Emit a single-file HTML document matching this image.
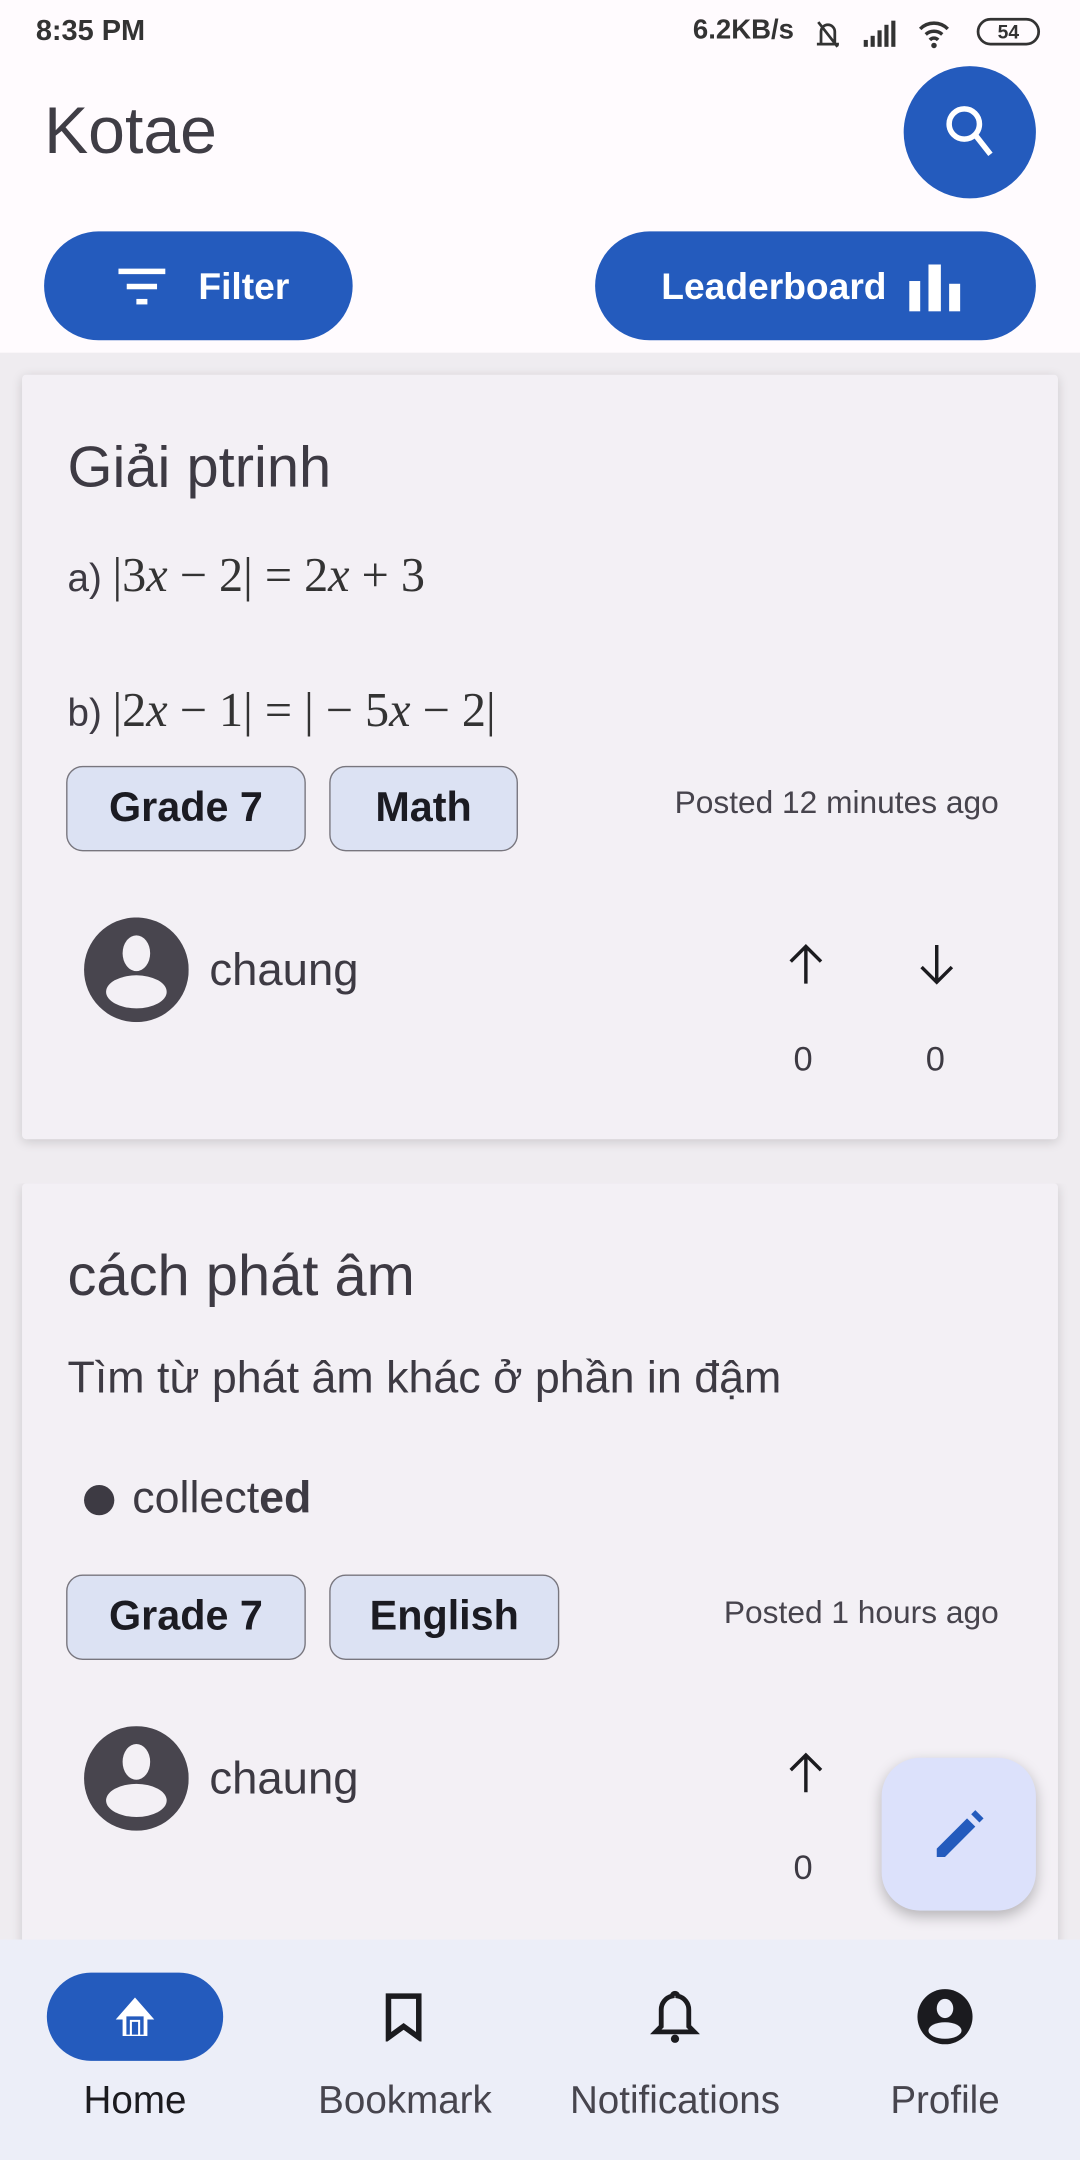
<!DOCTYPE html>
<html><head><meta charset="utf-8"><style>
html,body{margin:0;padding:0;width:1080px;height:2160px;overflow:hidden;background:#f1eef2;}
#w{position:absolute;left:0;top:0;width:784px;height:1568px;transform:scale(1.377551);transform-origin:0 0;font-family:"Liberation Sans","Noto Sans CJK SC",sans-serif;background:#efecf0;}
.a{position:absolute;}
.hdr{left:0;top:0;width:784px;height:256px;background:#fffbfe;}
.btn{background:#245bbd;border-radius:40px;color:#fff;font-weight:bold;font-size:26px;}
.card{left:16px;width:752px;background:#f3f0f5;box-shadow:0 2px 8px rgba(0,0,0,.15);border-radius:3px;}
.t{color:#3d3a43;}
.chip{background:#dce2f3;border:1.5px solid #78767e;border-radius:12px;height:62px;box-sizing:border-box;font-size:30px;font-weight:bold;color:#1b1b22;display:flex;align-items:center;justify-content:center;}
.math{font-family:"Liberation Serif",serif;font-size:35px;color:#333;}
.nav{font-size:28px;color:#47454e;text-align:center;width:196px;}
</style></head><body><div id="w">
<div class="a hdr"></div>
<div class="a" style="left:26px;top:11px;font-size:21px;font-weight:bold;color:#333">8:35 PM</div>
<div class="a" style="left:503px;top:11px;font-size:20px;font-weight:bold;color:#333">6.2KB/s</div>
<svg class="a" style="left:588px;top:12px" width="130" height="26" viewBox="0 0 130 26">
<path d="M5 20h16M8 20V11a5 5 0 0 1 10 0v9M6 4l14 18" stroke="#333" stroke-width="2" fill="none"/>
<rect x="39" y="17" width="3" height="5" fill="#333"/><rect x="44" y="14" width="3" height="8" fill="#333"/><rect x="49" y="10" width="3" height="12" fill="#333"/><rect x="54" y="6" width="3" height="16" fill="#333"/><rect x="59" y="3" width="3" height="19" fill="#333"/>
<path d="M80 9a14 14 0 0 1 20 0M84 13a9 9 0 0 1 12 0M87 17a4 4 0 0 1 6 0" stroke="#333" stroke-width="2.5" fill="none"/><circle cx="90" cy="21" r="2" fill="#333"/>
</svg>
<div class="a" style="left:709px;top:13px;width:46px;height:20px;border:2px solid #333;border-radius:10px;box-sizing:border-box;font-size:14px;font-weight:bold;text-align:center;line-height:16px;color:#333">54</div>
<div class="a" style="left:32px;top:68px;font-size:48px;color:#3f3d45">Kotae</div>
<div class="a" style="left:656px;top:48px;width:96px;height:96px;border-radius:50%;background:#245bbd"></div>
<svg class="a" style="left:678px;top:70px" width="52" height="52" viewBox="0 0 52 52"><circle cx="22" cy="20" r="11" stroke="#fff" stroke-width="4" fill="none"/><path d="M30 28l11 14" stroke="#fff" stroke-width="4"/></svg>
<div class="a btn" style="left:32px;top:168px;width:224px;height:79px"></div>
<svg class="a" style="left:84px;top:193px" width="40" height="30"><rect x="2" y="2" width="34" height="4" fill="#fff"/><rect x="8" y="13" width="22" height="4" fill="#fff"/><rect x="15" y="24" width="8" height="4" fill="#fff"/></svg>
<div class="a" style="left:144px;top:193px;font-size:27px;font-weight:bold;color:#fff">Filter</div>
<div class="a btn" style="left:432px;top:168px;width:320px;height:79px"></div>
<div class="a" style="left:480px;top:193px;font-size:27px;font-weight:bold;color:#fff">Leaderboard</div>
<svg class="a" style="left:660px;top:190px" width="42" height="40"><rect x="0" y="14" width="8" height="22" fill="#fff"/><rect x="14" y="2" width="9" height="34" fill="#fff"/><rect x="29" y="16" width="8" height="20" fill="#fff"/></svg>

<div class="a card" style="top:272px;height:555px"></div>
<div class="a t" style="left:49px;top:315px;font-size:42px">Giải ptrinh</div>
<div class="a" style="left:49px;top:398px;font-size:28px;color:#3d3a43">a) <span class="math">|3<i>x</i> − 2| = 2<i>x</i> + 3</span></div>
<div class="a" style="left:49px;top:496px;font-size:28px;color:#3d3a43">b) <span class="math">|2<i>x</i> − 1| = | − 5<i>x</i> − 2|</span></div>
<div class="a chip" style="left:48px;top:556px;width:174px">Grade 7</div>
<div class="a chip" style="left:239px;top:556px;width:137px">Math</div>
<div class="a" style="right:59px;top:569px;font-size:23px;color:#47444d">Posted 12 minutes ago</div>

<div class="a" style="left:0;top:859px;width:784px;height:549px;overflow:hidden"><div class="a card" style="top:0;height:600px"></div></div>
<div class="a t" style="left:49px;top:902px;font-size:42px">cách phát âm</div>
<div class="a t" style="left:49px;top:982px;font-size:32.5px">Tìm từ phát âm khác ở phần in đậm</div>
<div class="a" style="left:61px;top:1078px;width:22px;height:22px;border-radius:50%;background:#3d3a43"></div>
<div class="a t" style="left:96px;top:1069px;font-size:32.5px">collect<b>ed</b></div>
<div class="a chip" style="left:48px;top:1143px;width:174px">Grade 7</div>
<div class="a chip" style="left:239px;top:1143px;width:167px">English</div>
<div class="a" style="right:59px;top:1157px;font-size:23px;color:#47444d">Posted 1 hours ago</div>

<svg class="a" style="left:61px;top:666px" width="76" height="76" viewBox="0 0 76 76"><circle cx="38" cy="38" r="38" fill="#48454e"/><ellipse cx="38" cy="26" rx="10" ry="13" fill="#f3f0f5"/><ellipse cx="38" cy="54" rx="22" ry="12" fill="#f3f0f5"/></svg>
<div class="a t" style="left:152px;top:685px;font-size:33px">chaung</div>
<svg class="a" style="left:570px;top:684px" width="30" height="32"><path d="M15 30V3M4 14L15 3l11 11" stroke="#1b1b1f" stroke-width="2.5" fill="none"/></svg>
<svg class="a" style="left:665px;top:684px" width="30" height="32"><path d="M15 2v27M4 18l11 11 11-11" stroke="#1b1b1f" stroke-width="2.5" fill="none"/></svg>
<div class="a t" style="left:576px;top:755px;font-size:25px">0</div>
<div class="a t" style="left:672px;top:755px;font-size:25px">0</div>

<svg class="a" style="left:61px;top:1253px" width="76" height="76" viewBox="0 0 76 76"><circle cx="38" cy="38" r="38" fill="#48454e"/><ellipse cx="38" cy="26" rx="10" ry="13" fill="#f3f0f5"/><ellipse cx="38" cy="54" rx="22" ry="12" fill="#f3f0f5"/></svg>
<div class="a t" style="left:152px;top:1272px;font-size:33px">chaung</div>
<svg class="a" style="left:570px;top:1271px" width="30" height="32"><path d="M15 30V3M4 14L15 3l11 11" stroke="#1b1b1f" stroke-width="2.5" fill="none"/></svg>
<div class="a t" style="left:576px;top:1342px;font-size:25px">0</div>

<div class="a" style="left:640px;top:1276px;width:112px;height:111px;border-radius:28px;background:#dce1fb;box-shadow:0 4px 10px rgba(0,0,0,.25)"></div>
<svg class="a" style="left:672px;top:1308px" width="48" height="48" viewBox="0 0 48 48"><path d="M8 40v-6L30 12l6 6L14 40z" fill="#245bbd"/><path d="M33 9l3-3 6 6-3 3z" fill="#245bbd"/></svg>

<div class="a" style="left:0;top:1408px;width:784px;height:160px;background:#eceef8"></div>
<div class="a" style="left:34px;top:1432px;width:128px;height:64px;border-radius:32px;background:#245bbd"></div>
<svg class="a" style="left:80px;top:1446px" width="36" height="36" viewBox="0 0 36 36"><path d="M18 4L4 20h5v12h18V20h5z" fill="#fff"/><path d="M13 31V19h10v12M17 31v-8h2v8" stroke="#245bbd" stroke-width="2.5" fill="none"/></svg>
<svg class="a" style="left:278px;top:1446px" width="32" height="36"><path d="M4 3h22v30l-11-8-11 8z" stroke="#1b1b1f" stroke-width="4" fill="none"/></svg>
<svg class="a" style="left:472px;top:1444px" width="36" height="40" viewBox="0 0 36 40"><path d="M18 3a2 2 0 0 1 2 2 10 10 0 0 1 8 10v12l4 4H4l4-4V15a10 10 0 0 1 8-10 2 2 0 0 1 2-2z" stroke="#1b1b1f" stroke-width="3.5" fill="none"/><circle cx="18" cy="36" r="3" fill="#1b1b1f"/></svg>
<svg class="a" style="left:665px;top:1443px" width="42" height="42" viewBox="0 0 42 42"><circle cx="21" cy="21" r="20" fill="#1b1b1f"/><ellipse cx="21" cy="15" rx="6" ry="7" fill="#eceef8"/><ellipse cx="21" cy="31" rx="12" ry="6" fill="#eceef8"/></svg>
<div class="a nav" style="left:0;top:1509px;color:#1b1b1f">Home</div>
<div class="a nav" style="left:196px;top:1509px">Bookmark</div>
<div class="a nav" style="left:392px;top:1509px">Notifications</div>
<div class="a nav" style="left:588px;top:1509px">Profile</div>
</div></body></html>
